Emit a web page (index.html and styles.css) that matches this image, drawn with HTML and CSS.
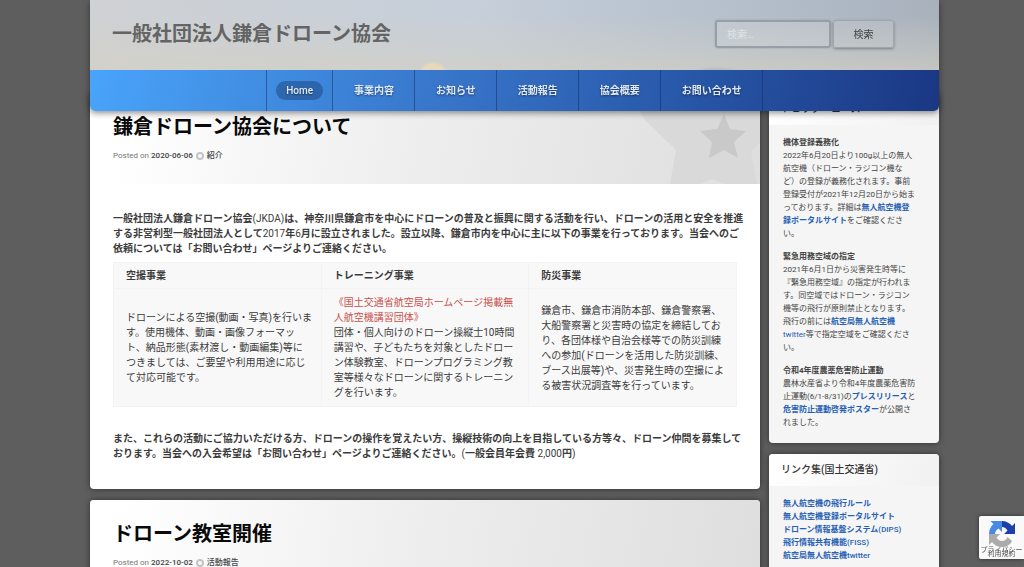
FILE: index.html
```html
<!DOCTYPE html>
<html lang="ja">
<head>
<meta charset="utf-8">
<meta name="viewport" content="width=device-width, initial-scale=1">
<title>一般社団法人鎌倉ドローン協会</title>
<link rel="stylesheet" href="styles.css">
</head>
<body>
<header class="site-header">
  <div class="banner">
    <h1 class="site-title"><a href="#">一般社団法人鎌倉ドローン協会</a></h1>
    <form class="search">
      <input class="search-field" type="search" placeholder="検索…" aria-label="検索">
      <button class="search-button" type="submit">検索</button>
    </form>
  </div>
  <nav class="main-nav">
    <ul class="menu">
      <li class="menu-item menu-home"><a class="current" href="#">Home</a></li>
      <li class="menu-item"><a href="#">事業内容</a></li>
      <li class="menu-item"><a href="#">お知らせ</a></li>
      <li class="menu-item"><a href="#">活動報告</a></li>
      <li class="menu-item"><a href="#">協会概要</a></li>
      <li class="menu-item"><a href="#">お問い合わせ</a></li>
    </ul>
  </nav>
</header>

<div class="layout">
  <main class="posts">
    <article class="card">
      <header class="post-head sticky-post">
        <svg class="ribbon" viewBox="0 0 120 91" aria-hidden="true">
          <path fill="#d9d9d9" d="M-8 0H120V50L111 58L117 91H85L72 86L60 91H30L36 57L3 25Z"/>
          <path fill="#c9c9c9" d="M84 21L90 36L106 38L94 49L98 65L84 57L69 65L72 49L60 38L77 36Z"/>
        </svg>
        <h2 class="post-title"><a href="#">鎌倉ドローン協会について</a></h2>
        <p class="meta">Posted on <a href="#">2020-06-06</a><span class="dot"></span><a href="#">紹介</a></p>
      </header>
      <div class="post-body">
        <p><strong>一般社団法人鎌倉ドローン協会</strong>(JKDA)<strong>は、神奈川県鎌倉市を中心にドローンの普及と振興に関する活動を行い、ドローンの活用と安全を推進<br>する非営利型一般社団法人として</strong>2017<strong>年</strong>6<strong>月に設立されました。設立以降、鎌倉市内を中心に主に以下の事業を行っております。当会へのご<br>依頼については「お問い合わせ」ページよりご連絡ください。</strong></p>
        <table class="services">
          <thead>
            <tr><th scope="col">空撮事業</th><th scope="col">トレーニング事業</th><th scope="col">防災事業</th></tr>
          </thead>
          <tbody>
            <tr>
              <td>ドローンによる空撮(動画・写真)を行いま<br>す。使用機体、動画・画像フォーマッ<br>ト、納品形態(素材渡し・動画編集)等に<br>つきましては、ご要望や利用用途に応じ<br>て対応可能です。</td>
              <td><a class="notice" href="#">《国土交通省航空局ホームページ掲載無<br>人航空機講習団体》</a><br>団体・個人向けのドローン操縦士10時間<br>講習や、子どもたちを対象としたドロー<br>ン体験教室、ドローンプログラミング教<br>室等様々なドローンに関するトレーニン<br>グを行います。</td>
              <td>鎌倉市、鎌倉市消防本部、鎌倉警察署、<br>大船警察署と災害時の協定を締結してお<br>り、各団体様や自治会様等での防災訓練<br>への参加(ドローンを活用した防災訓練、<br>ブース出展等)や、災害発生時の空撮によ<br>る被害状況調査等を行っています。</td>
            </tr>
          </tbody>
        </table>
        <p><strong>また、これらの活動にご協力いただける方、ドローンの操作を覚えたい方、操縦技術の向上を目指している方等々、ドローン仲間を募集して<br>おります。当会への入会希望は「お問い合わせ」ページよりご連絡ください。</strong>(<strong>一般会員年会費</strong> 2,000<strong>円</strong>)</p>
      </div>
    </article>

    <article class="card">
      <header class="post-head">
        <h2 class="post-title"><a href="#">ドローン教室開催</a></h2>
        <p class="meta">Posted on <a href="#">2022-10-02</a><span class="dot"></span><a href="#">活動報告</a></p>
      </header>
    </article>
  </main>

  <aside class="sidebar">
    <section class="card widget">
      <h3 class="widget-title">トピックニュース</h3>
      <div class="widget-body">
        <p><strong>機体登録義務化</strong><br>2022年6月20日より100g以上の無人<br>航空機（ドローン・ラジコン機な<br>ど）の登録が義務化されます。事前<br>登録受付が2021年12月20日から始ま<br>っております。詳細は<a href="#"><strong>無人航空機登<br>録ポータルサイト</strong></a>をご確認くださ<br>い。</p>
        <p><strong>緊急用務空域の指定</strong><br>2021年6月1日から災害発生時等に<br>『緊急用務空域』の指定が行われま<br>す。同空域ではドローン・ラジコン<br>機等の飛行が原則禁止となります。<br>飛行の前には<a href="#"><strong>航空局無人航空機</strong><br>twitter</a>等で指定空域をご確認くださ<br>い。</p>
        <p><strong>令和4年度農薬危害防止運動</strong><br>農林水産省より令和4年度農薬危害防<br>止運動(6/1-8/31)の<a href="#"><strong>プレスリリース</strong></a>と<br><a href="#"><strong>危害防止運動啓発ポスター</strong></a>が公開さ<br>れました。</p>
      </div>
    </section>
    <section class="card widget widget-links">
      <h3 class="widget-title">リンク集(国土交通省)</h3>
      <div class="widget-body">
        <ul class="links">
          <li><a href="#"><strong>無人航空機の飛行ルール</strong></a></li>
          <li><a href="#"><strong>無人航空機登録ポータルサイト</strong></a></li>
          <li><a href="#"><strong>ドローン情報基盤システム</strong>(DIPS)</a></li>
          <li><a href="#"><strong>飛行情報共有機能</strong>(FISS)</a></li>
          <li><a href="#"><strong>航空局無人航空機</strong>twitter</a></li>
        </ul>
      </div>
    </section>
  </aside>
</div>

<div class="captcha">
  <svg class="captcha-logo" viewBox="0 0 28 28" aria-hidden="true">
    <path fill="#1d3fae" d="M14 1C18 1 22 3 24 6L27 3V14H16L19.500 10.500C18 8 16 7 14 7Z"/>
    <path fill="#4a88e8" d="M14 1V12L10.500 8.500C8 10 7 12 7 14H1C1 10 3 6 5.500 4L2.500 1Z"/>
    <path fill="#ababab" d="M1 14H12L8.500 17.500C10 20 12 21 14 21C16.500 21 18.500 19.500 19.500 17L24 21C22 25 18 27 14 27C10 27 6 25 4 22L1 25Z"/>
  </svg>
  <p class="captcha-links"><a href="#">プライバシー</a><a href="#">利用規約</a></p>
</div>
</body>
</html>
```

FILE: styles.css
```css
* {
  box-sizing: border-box;
}

html {
  height: 100%;
  overflow: hidden;
}

body {
  height: 100%;
  margin: 0;
  padding: 0 85px 0 90px;
  overflow: hidden;
  background: #5e5e5e;
  color: #444;
  font-family: Roboto, "Noto Sans CJK JP", sans-serif;
  font-size: 10px;
  line-height: 15px;
  text-spacing-trim: space-all;
}

h1, h2, h3, p, ul {
  margin: 0;
  padding: 0;
  font-weight: 500;
}

p {
  font-weight: 400;
}

ul {
  list-style: none;
}

a {
  color: inherit;
  text-decoration: none;
}

strong {
  font-weight: 700;
}

/* Header */
.site-header {
  position: sticky;
  top: 0;
  z-index: 2;
  border-radius: 0 0 5px 5px;
  box-shadow: 0 2px 6px rgba(0, 0, 0, 0.45);
}

.banner {
  display: flex;
  align-items: center;
  justify-content: space-between;
  height: 70px;
  padding: 0 45px 2px 22px;
  background:
    radial-gradient(circle at 343px 77px, #ead9b9 0 12px, rgba(234, 217, 185, 0) 16px),
    radial-gradient(ellipse 40px 14px at 627px 78px, rgba(165, 165, 178, 0.4) 60%, transparent 85%),
    linear-gradient(to bottom, rgba(212, 208, 196, 0) 20%, rgba(212, 208, 196, 0.65)),
    linear-gradient(to right, #cfd1d4, #c6cfda 45%, #b5c0cc 75%, #a8b1bc);
}

.site-title {
  color: #646464;
  font-size: 20px;
  font-weight: 700;
  line-height: 24px;
}

.search {
  display: flex;
  align-items: center;
  gap: 2px;
}

.search-field {
  width: 116px;
  height: 28px;
  padding: 0 10px;
  border: 2px solid #989ea5;
  border-radius: 3px;
  background: rgba(255, 255, 255, 0.12);
  box-shadow: 0 0 2px rgba(0, 0, 0, 0.2);
  color: #444;
  font: inherit;
  outline: 0;
}

.search-field::placeholder {
  color: #dfe3e7;
}

.search-button {
  width: 61px;
  height: 28px;
  border: 1px solid #a0a5ab;
  border-radius: 3px;
  background: rgba(255, 255, 255, 0.08);
  box-shadow: 0 1px 3px rgba(0, 0, 0, 0.35);
  color: #444;
  font: inherit;
}

.main-nav {
  border-radius: 0 0 5px 5px;
  background: linear-gradient(105deg, #49a4fa, #3672c6 45%, #2755a5 72%, #1a3783);
}

.menu {
  display: flex;
  justify-content: center;
}

.menu-item {
  display: flex;
  align-items: center;
  height: 41px;
  padding: 0 20px 1px 21px;
  border-right: 1px solid rgba(10, 35, 90, 0.45);
  color: #dfeaf8;
  font-weight: 700;
  text-shadow: 0 1px 2px rgba(0, 0, 0, 0.5);
}

.menu-home {
  padding: 0 9px 1px;
  border-left: 1px solid rgba(10, 35, 90, 0.45);
  font-weight: 500;
}

.current {
  padding: 2px 10px;
  border-radius: 10px;
  background: rgba(20, 50, 100, 0.4);
}

/* Content columns, scrolled slightly under the header */
.layout {
  display: grid;
  grid-template-columns: minmax(0, 1fr) 170px;
  gap: 9px;
  align-items: start;
  margin-top: -18px;
}

.posts,
.sidebar {
  display: grid;
  gap: 11px;
}

.card {
  overflow: hidden;
  border-radius: 4px;
  background: #fff;
  box-shadow: 0 0 6px rgba(0, 0, 0, 0.5);
}

.post-head {
  position: relative;
  padding: 22px 23px 23px;
  background: linear-gradient(100deg, #fff 5%, #eee 48%, #dedede);
}

.ribbon {
  position: absolute;
  top: 0;
  right: 0;
  width: 120px;
  height: 91px;
  overflow: visible;
}

.post-title {
  position: relative;
  margin-bottom: 12px;
  color: #0a0a0a;
  font-size: 20px;
  font-weight: 700;
  line-height: 24px;
}

.meta {
  display: flex;
  align-items: center;
  gap: 2px;
  color: #777;
  font-size: 8px;
  line-height: 10px;
}

.meta a {
  color: #444;
  font-weight: 500;
}

.dot {
  width: 8px;
  height: 8px;
  margin: 0 1px;
  border: 2px solid #c4c4c4;
  border-radius: 50%;
}

.post-body {
  padding: 27px 23px 28px;
  color: #3c3c3c;
}

.post-body p {
  white-space: nowrap;
}

.services {
  width: 100%;
  margin: 6px 0 24px;
  border-collapse: collapse;
  table-layout: fixed;
  background: #f8f8f8;
}

.services th,
.services td {
  padding: 6px 0 6px 12px;
  border: 1px solid #f3f3f3;
  text-align: left;
  white-space: nowrap;
}

.services th {
  padding: 5px 0 5px 12px;
}

.notice {
  color: #c9514d;
}

/* Sidebar */
.widget {
  background: #f5f5f5;
}

.widget-links {
  min-height: 130px;
}

.widget-title {
  padding: 8px 12px 9px;
  background: linear-gradient(110deg, #fff, #f1f1f1);
  color: #333;
  font-size: 10px;
  line-height: 15px;
}

.widget-body {
  padding: 11px 14px 14px;
  font-size: 8px;
  line-height: 13px;
  white-space: nowrap;
}

.widget-body p + p {
  margin-top: 10px;
}

.widget-body a {
  color: #2560b4;
}

/* Privacy badge */
.captcha {
  position: fixed;
  right: 0;
  bottom: 8px;
  z-index: 3;
  width: 45px;
  padding-top: 4px;
  border-radius: 2px 0 0 2px;
  background: #f9f9f9;
  box-shadow: 0 0 4px rgba(0, 0, 0, 0.5);
  text-align: center;
}

.captcha-logo {
  display: block;
  width: 28px;
  height: 28px;
  margin: 0 auto;
}

.captcha-links {
  display: grid;
  grid-auto-rows: 4px;
  padding-bottom: 3px;
  color: #555;
  font-size: 7px;
  line-height: 4px;
  white-space: nowrap;
}
```
